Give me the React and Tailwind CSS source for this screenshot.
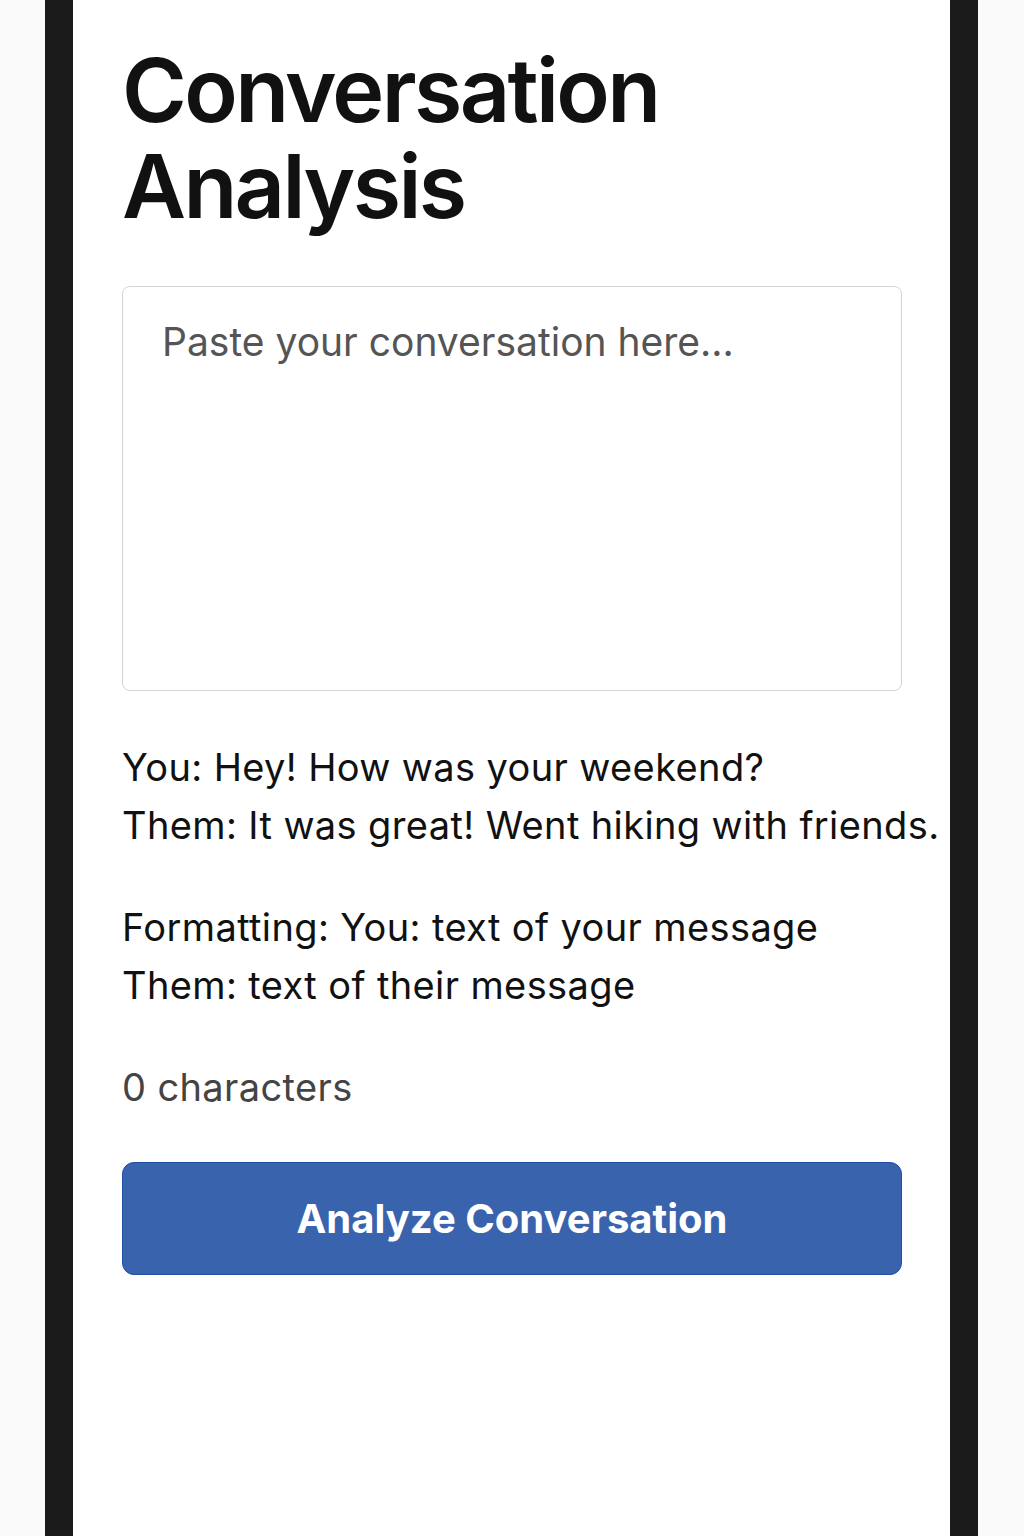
import { useState } from "react";

/* ── Conversation analysis screen ── */
export default function App() {
  const [text, setText] = useState("");

  return (
    <div
      className="min-h-[1536px] bg-[#fafafa] flex pl-[45px]"
      style={{ fontFamily: "Inter, 'Noto Sans', sans-serif" }}
    >
      {/* Device frame */}
      <div className="w-[28px] bg-[#1b1b1b] shrink-0" />
      <div className="w-[877px] bg-white shrink-0 pl-[49px] pr-[48px] pt-[42px]">
        <h1 className="text-[88px] leading-[96px] font-semibold text-[#111111] tracking-[-0.03em]">
          Conversation
          <br />
          Analysis
        </h1>

        <textarea
          value={text}
          onChange={(e) => setText(e.target.value)}
          placeholder="Paste your conversation here..."
          className="mt-[52px] block w-[780px] h-[405px] resize-none rounded-lg border border-[#d2d4da] px-[39px] pt-[29px] text-[39px] leading-[52px] text-[#111111] placeholder:text-[#555555] outline-none"
        />

        {/* Example */}
        <div className="mt-[47px] text-[38px] leading-[58px] tracking-[0.01em] text-[#111111] whitespace-nowrap">
          <p>You: Hey! How was your weekend?</p>
          <p>Them: It was great! Went hiking with friends.</p>
        </div>

        <div className="mt-[44px] text-[38px] leading-[58px] tracking-[0.01em] text-[#111111] whitespace-nowrap">
          <p>Formatting: You: text of your message</p>
          <p>Them: text of their message</p>
        </div>

        <p className="mt-[44px] text-[38px] leading-[58px] tracking-[0.01em] text-[#444444]">
          {text.length} characters
        </p>

        <button className="mt-[46px] w-[780px] h-[113px] rounded-xl bg-[#3a63ae] border border-[#1f4ea6] text-white text-[40px] font-bold">
          Analyze Conversation
        </button>
      </div>
      <div className="w-[28px] bg-[#1b1b1b] shrink-0" />
    </div>
  );
}
